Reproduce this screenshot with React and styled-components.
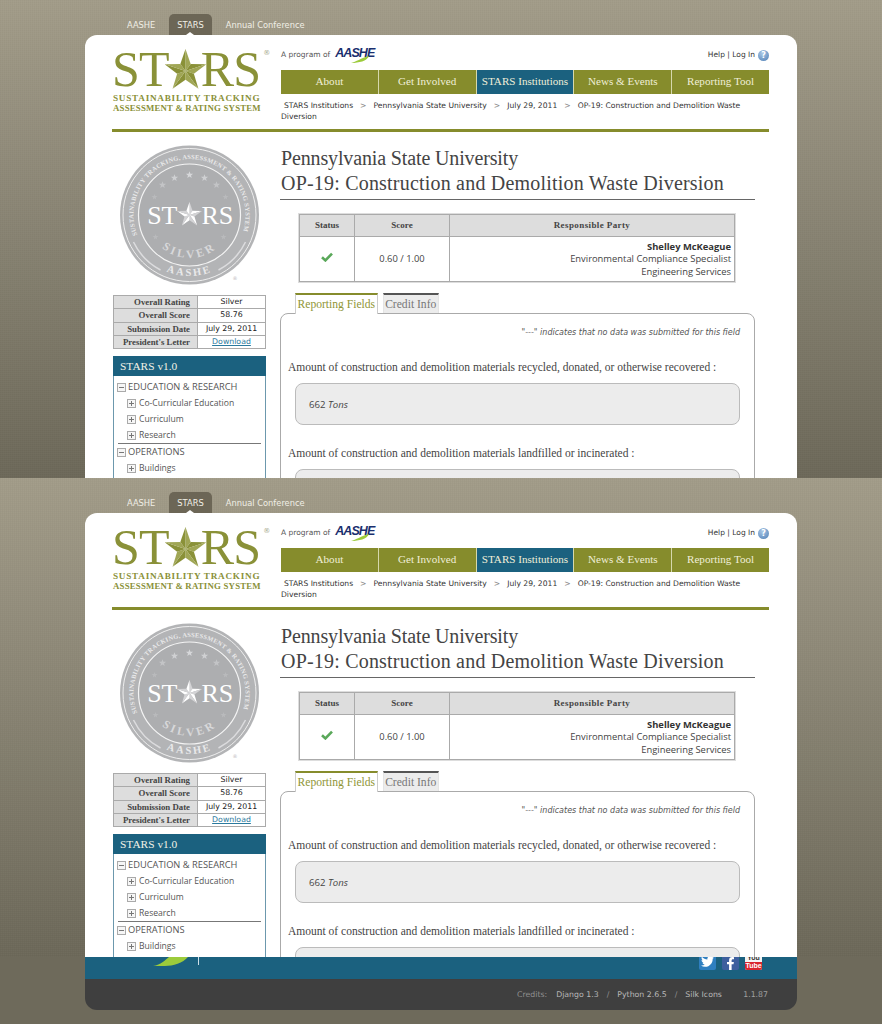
import React from "react";
import styled, { createGlobalStyle } from "styled-components";
import { FaTwitter, FaFacebookF } from "react-icons/fa";

const OLIVE = "#868c2c";
const TEAL = "#1b617f";
const SERIF = `"Liberation Serif", "Times New Roman", serif`;
const VERD = `"DejaVu Sans", Verdana, sans-serif`;
const SANS = `"Open Sans", "Noto Sans", Tahoma, sans-serif`;

const Global = createGlobalStyle`
  html, body { margin: 0; padding: 0; background: #6e6a5b; }
  * { box-sizing: border-box; }
`;

const Shot = styled.div`
  height: ${(p) => p.$h}px;
  overflow: hidden;
  background:
    repeating-linear-gradient(0deg, rgba(255,255,255,.02) 0 1px, transparent 1px 2px),
    repeating-linear-gradient(90deg, rgba(0,0,0,.02) 0 1px, transparent 1px 2px),
    linear-gradient(180deg, #a29c89 0%, #6c6859 100%);
`;
const TopNav = styled.nav`
  height: 35px;
  padding: 14px 0 0 119px;
  display: flex;
  gap: 6px;
`;
const TopItem = styled.a`
  position: relative;
  height: 21px;
  padding: 0 8px;
  font: 8.3px/22px ${VERD};
  color: #f1efe6;
  border-radius: 5px 5px 0 0;
  background: ${(p) => (p.$on ? "#6c6656" : "transparent")};
  ${(p) =>
    p.$on &&
    `&::after{content:"";position:absolute;left:17px;bottom:0;border:4px solid transparent;border-top:0;border-bottom:3px solid #fff;}`}
`;
const Page = styled.div`
  margin-left: 85px;
  width: 712px;
  padding: 0 28px 0 27px;
  background: #fff;
  border-radius: 12px 12px 0 0;
`;
const Header = styled.header`
  height: 97px;
  border-bottom: 3px solid ${OLIVE};
  display: grid;
  grid-template-columns: 169px 488px;
`;
const Logo = styled.div`
  padding: 10px 0 0 0;
  color: #8a9138;
`;
const LogoMark = styled.div`
  display: flex;
  align-items: flex-start;
  height: 48px;
  font: 400 50px/48px ${SERIF};
  letter-spacing: -0.8px;
`;
const LogoStar = styled.svg`
  margin: 3px -5px 0 -4px;
  flex: none;
`;
const Reg = styled.span`
  font: 7px/12px ${VERD};
  margin: 2px 0 0 3px;
  color: #a5a88a;
  letter-spacing: 0;
`;
const LogoLine = styled.div`
  font: 700 ${(p) => p.$size}px/10px ${SERIF};
  letter-spacing: ${(p) => p.$ls}px;
  margin-left: 1px;
  white-space: nowrap;
`;
const HeadRight = styled.div`
  display: flex;
  flex-direction: column;
`;
const Utility = styled.div`
  height: 35px;
  padding-top: 12px;
  display: flex;
  justify-content: space-between;
  font: 7.5px/16px ${VERD};
  color: #555;
`;
const Program = styled.div`
  display: flex;
  gap: 5px;
  align-items: flex-start;
`;
const AasheLogo = styled.span`
  position: relative;
  display: inline-block;
  width: 36px;
  font: italic 700 12.5px/13px "Liberation Sans", sans-serif;
  letter-spacing: -0.9px;
  color: #1a2f6e;
  svg { position: absolute; left: 16px; top: 9px; }
`;
const HelpLinks = styled.div`
  display: flex;
  gap: 3px;
  color: #333;
  font-size: 7.5px;
`;
const HelpIcon = styled.span`
  width: 11px;
  height: 11px;
  margin-top: 3px;
  border-radius: 50%;
  background: radial-gradient(circle at 40% 30%, #a9c7e6, #4f7fb5);
  color: #fff;
  font: 700 8px/11px ${VERD};
  text-align: center;
`;
const MainNav = styled.nav`
  height: 24px;
  display: flex;
  background: ${OLIVE};
`;
const NavItem = styled.a`
  flex: 1;
  text-align: center;
  font: 400 11.1px/23px ${SERIF};
  white-space: nowrap;
  color: #f0efd8;
  background: ${(p) => (p.$on ? TEAL : "transparent")};
  & + & { border-left: 1px solid #d6d8ac; }
`;
const Crumbs = styled.div`
  margin-top: 6px;
  font: 7.62px/11px ${VERD};
  color: #333;
  text-indent: 3px;
`;
const Sep = styled.span`
  color: #888;
  margin: 0 7px;
`;
const Body = styled.div`
  display: grid;
  grid-template-columns: 153px 475px;
  column-gap: 14px;
  margin-left: 1px;
`;
const Side = styled.aside`
  padding-top: 13px;
`;
const Seal = styled.svg`
  display: block;
  margin-bottom: 10px;
`;
const RatingTable = styled.table`
  width: 153px;
  border-collapse: collapse;
  margin-bottom: 7px;
  td { border: 1px solid #aaa; height: 13.25px; padding: 0; }
`;
const RatingLabel = styled.td`
  width: 84px;
  background: #ddd;
  text-align: right;
  padding-right: 7px !important;
  font: 700 8.8px/12px ${SERIF};
  color: #444;
`;
const RatingValue = styled.td`
  text-align: center;
  font: 7.8px/12px ${VERD};
  color: #222;
`;
const Download = styled.a`
  color: #2b7a9e;
  text-decoration: underline;
`;
const TreePanel = styled.div`
  height: 140px;
  border: 1px solid #6c98ad;
  border-top: 0;
`;
const TreeHead = styled.div`
  height: 20px;
  margin: 0 -1px;
  background: ${TEAL};
  color: #f2f2e6;
  font: 400 11.4px/20px ${SERIF};
  padding-left: 7px;
`;
const TreeRow = styled.div`
  height: 16px;
  display: flex;
  align-items: center;
  gap: ${(p) => (p.$child ? 3 : 2)}px;
  padding-left: ${(p) => (p.$child ? 13 : 3)}px;
  font: ${(p) => (p.$child ? 8.6 : 9.3)}px/16px ${SANS};
  color: #555;
  white-space: nowrap;
`;
const TreeList = styled.div`
  padding-top: 3px;
`;
const TreeGroup = styled.div`
  & + & {
    margin: 0 4px;
    border-top: 1px solid #777;
  }
  & + & > div { margin-left: -4px; }
`;
const Main = styled.main``;
const Title = styled.h1`
  margin: 0;
  padding: 14px 0 3px 1px;
  border-bottom: 1px solid #666;
  font: 400 20px/25px ${SERIF};
  color: #444;
`;
const TitleLine = styled.span`
  display: block;
  letter-spacing: ${(p) => p.$ls}px;
  white-space: nowrap;
`;
const CreditTable = styled.table`
  margin: 14px 0 11px 19px;
  width: 436px;
  border-collapse: collapse;
  outline: 1px solid #ddd;
  th, td { border: 1px solid #aaa; padding: 0; }
  th {
    height: 22px;
    padding-bottom: 1px;
    background: #ddd;
    font: 700 9px/12px ${SERIF};
    color: #444;
  }
  td { height: 45px; text-align: center; font: 9.4px/12.6px ${SANS}; color: #444; }
`;
const PartyHead = styled.th`
  letter-spacing: 0.4px;
`;
const Party = styled.td`
  && { text-align: right; padding: 1px 3px 0 0; }
  strong { color: #333; }
`;
const Tabs = styled.div`
  display: flex;
  gap: 5px;
  margin: 0 0 -1px 15px;
  position: relative;
`;
const Tab = styled.a`
  height: ${(p) => (p.$on ? 21 : 20)}px;
  padding: 0 1.5px;
  border-top: 2px solid ${(p) => (p.$on ? OLIVE : "#555")};
  border-left: 1px solid ${(p) => (p.$on ? "#ccc" : "#e4e4e4")};
  border-right: 1px solid ${(p) => (p.$on ? "#ccc" : "#e4e4e4")};
  background: ${(p) => (p.$on ? "#fff" : "#ececec")};
  color: ${(p) => (p.$on ? "#8f9536" : "#777")};
  font: 400 11.6px/20px ${SERIF};
  white-space: nowrap;
`;
const Panel = styled.section`
  height: 300px;
  border: 1px solid #aaa;
  border-radius: 8px 8px 0 0;
  padding: 13px 14px 0 7px;
`;
const Note = styled.div`
  text-align: right;
  font: italic 8px/12px ${VERD};
  color: #555;
`;
const FieldLabel = styled.div`
  margin-top: 20px;
  font: 400 11.5px/16px ${SERIF};
  color: #444;
`;
const FieldValue = styled.div`
  margin: 8px 0 0 7px;
  height: 42px;
  padding-left: 13px;
  background: #ececec;
  border: 1px solid #bbb;
  border-radius: 8px;
  font: 9.6px/42px ${SANS};
  color: #444;
  em { font-style: italic; }
`;
const Footer = styled.footer`
  margin-left: 85px;
  width: 712px;
  border-radius: 0 0 12px 12px;
  overflow: hidden;
`;
const FooterBand = styled.div`
  height: 22px;
  background: ${TEAL};
  padding: 0 35px 0 68px;
  display: flex;
  align-items: flex-start;
  justify-content: space-between;
  overflow: hidden;
`;
const FooterBrand = styled.div`
  display: flex;
  gap: 8px;
`;
const Socials = styled.div`
  display: flex;
  gap: 6px;
  margin-top: -4px;
`;
const Tile = styled.span`
  width: 17px;
  height: 17px;
  border-radius: 2px;
  background: ${(p) => p.$bg};
  color: #fff;
  display: flex;
  align-items: ${(p) => (p.$end ? "flex-end" : "center")};
  justify-content: center;
  font-size: 13px;
`;
const YouTube = styled.span`
  width: 17px;
  height: 17px;
  display: flex;
  flex-direction: column;
  background: #f4f4f4;
  border-radius: 2px;
  overflow: hidden;
  text-align: center;
  font: 700 7px/8px "Liberation Sans", sans-serif;
`;
const YouPart = styled.span`
  height: 9px;
  line-height: 9px;
  color: #333;
`;
const TubePart = styled.span`
  height: 8px;
  background: #d9262c;
  color: #fff;
`;
const FooterBar = styled.div`
  height: 31px;
  background: #3f3f3f;
  padding: 0 29px 0 432px;
  display: flex;
  align-items: center;
  white-space: nowrap;
  font: 7.8px/12px ${VERD};
  color: #b8b8b8;
`;
const Muted = styled.span`
  color: #8f8f8f;
  margin-right: 9px;
`;
const Slash = styled.span`
  color: #8f8f8f;
  margin: 0 8px;
`;
const Version = styled.span`
  margin-left: auto;
  color: #a0a0a0;
`;

const points = (cx, cy, R, r) => {
  const p = [];
  for (let i = 0; i < 10; i++) {
    const a = -Math.PI / 2 + (i * Math.PI) / 5;
    const rad = i % 2 ? r : R;
    p.push([cx + rad * Math.cos(a), cy + rad * Math.sin(a)]);
  }
  return p;
};

function FacetStar({ cx, cy, R, light, dark }) {
  const p = points(cx, cy, R, R * 0.4);
  return (
    <g>
      {p.map((pt, i) => {
        const n = p[(i + 1) % 10];
        return (
          <polygon
            key={i}
            points={`${cx},${cy} ${pt[0]},${pt[1]} ${n[0]},${n[1]}`}
            fill={i % 2 ? light : dark}
          />
        );
      })}
    </g>
  );
}

function PlainStar({ x, y, r, fill }) {
  const p = points(x, y, r, r * 0.42).map((q) => q.join(",")).join(" ");
  return <polygon points={p} fill={fill} />;
}

const sealStars = [
  [0, -40, "#d6d7d9"], [-15, -37, "#cfd0d2"], [15, -37, "#cfd0d2"], [-27, -30, "#c3c4c6"], [27, -30, "#c3c4c6"],
  [-35, -18, "#b9babc"], [36, -18, "#b9babc"], [-34, 22, "#b9babc"], [34, 22, "#b9babc"],
];

function SealArt() {
  return (
    <Seal width="153" height="140" viewBox="-76.5 -70 153 140">
      <defs>
        <path id="seal-top" d="M -52.3 20 A 56 56 0 1 1 52.3 20" />
        <path id="seal-aashe" d="M -40 46 A 61 61 0 0 0 40 46" />
        <path id="seal-silver" d="M -36 23.5 A 43 43 0 0 0 36 23.5" />
      </defs>
      <circle r="69.5" fill="#b3b4b6" />
      <circle r="66.5" fill="none" stroke="#eee" strokeWidth="1" />
      <circle r="51" fill="#adaeb0" stroke="#f4f4f4" strokeWidth="1.2" />
      <path d="M -56 27 A 62 62 0 0 0 -29 55" fill="none" stroke="#dcdcde" strokeWidth="1.5" />
      <path d="M 56 27 A 62 62 0 0 1 29 55" fill="none" stroke="#dcdcde" strokeWidth="1.5" />
      <text fontFamily="Liberation Serif, serif" fontSize="6.4" fontWeight="700" fill="#e9e9ea">
        <textPath href="#seal-top" startOffset="0" textLength="212" lengthAdjust="spacing">
          SUSTAINABILITY TRACKING, ASSESSMENT &amp; RATING SYSTEM
        </textPath>
      </text>
      <text fontFamily="Liberation Serif, serif" fontSize="10.5" fontWeight="700" letterSpacing="2.2" fill="#e9e9ea">
        <textPath href="#seal-aashe" startOffset="50%" textAnchor="middle">AASHE</textPath>
      </text>
      <text fontFamily="Liberation Serif, serif" fontSize="11.5" fontWeight="700" letterSpacing="3" fill="#d8d8da">
        <textPath href="#seal-silver" startOffset="50%" textAnchor="middle">SILVER</textPath>
      </text>
      {sealStars.map(([x, y, fill], i) => (
        <PlainStar key={i} x={x} y={y} r={i > 4 ? 3 : 3.8} fill={fill} />
      ))}
      <text x="-12" y="9" textAnchor="end" fontFamily="Liberation Serif, serif" fontSize="26" fill="#fff">ST</text>
      <text x="12" y="9" fontFamily="Liberation Serif, serif" fontSize="26" fill="#fff">RS</text>
      <FacetStar cx={0} cy={0} R={13} light="#fff" dark="#d4d4d6" />
      <text x="43" y="65" fontSize="5" fill="#bbb" fontFamily="DejaVu Sans, sans-serif">®</text>
    </Seal>
  );
}

const Box = ({ open }) => (
  <svg width="9" height="9" viewBox="0 0 9 9" style={{ flex: "none" }}>
    <rect x=".5" y=".5" width="8" height="8" fill="#f6f6f6" stroke="#aaa" />
    <path d={open ? "M2 4.5h5" : "M2 4.5h5M4.5 2v5"} stroke="#777" />
  </svg>
);

function Capture({ h }) {
  return (
    <Shot $h={h}>
      <TopNav>
        <TopItem>AASHE</TopItem>
        <TopItem $on>STARS</TopItem>
        <TopItem>Annual Conference</TopItem>
      </TopNav>
      <Page>
        <Header>
          <Logo>
            <LogoMark>
              ST
              <LogoStar width="41" height="43" viewBox="0 0 41 43">
                <FacetStar cx={20.5} cy={23} R={22} light="#8a9138" dark="#a0a655" />
              </LogoStar>
              RS
              <Reg>®</Reg>
            </LogoMark>
            <LogoLine $size={9.2} $ls={0.74}>SUSTAINABILITY TRACKING</LogoLine>
            <LogoLine $size={8.8} $ls={0.2}>ASSESSMENT &amp; RATING SYSTEM</LogoLine>
          </Logo>
          <HeadRight>
            <Utility>
              <Program>
                A program of
                <AasheLogo>
                  AASHE
                  <svg width="18" height="7" viewBox="0 0 18 7">
                    <path d="M0 7C5 6 10 2 18 0 16 5 8 7 0 7Z" fill="#9ccb3b" />
                  </svg>
                </AasheLogo>
              </Program>
              <HelpLinks>
                Help | Log In
                <HelpIcon>?</HelpIcon>
              </HelpLinks>
            </Utility>
            <MainNav>
              <NavItem>About</NavItem>
              <NavItem>Get Involved</NavItem>
              <NavItem $on>STARS Institutions</NavItem>
              <NavItem>News &amp; Events</NavItem>
              <NavItem>Reporting Tool</NavItem>
            </MainNav>
            <Crumbs>
              STARS Institutions<Sep>&gt;</Sep>Pennsylvania State University<Sep>&gt;</Sep>July 29, 2011<Sep>&gt;</Sep>OP-19: Construction and Demolition Waste Diversion
            </Crumbs>
          </HeadRight>
        </Header>
        <Body>
          <Side>
            <SealArt />
            <RatingTable>
              <tbody>
                <tr><RatingLabel>Overall Rating</RatingLabel><RatingValue>Silver</RatingValue></tr>
                <tr><RatingLabel>Overall Score</RatingLabel><RatingValue>58.76</RatingValue></tr>
                <tr><RatingLabel>Submission Date</RatingLabel><RatingValue>July 29, 2011</RatingValue></tr>
                <tr><RatingLabel>President's Letter</RatingLabel><RatingValue><Download>Download</Download></RatingValue></tr>
              </tbody>
            </RatingTable>
            <TreePanel>
              <TreeHead>STARS v1.0</TreeHead>
              <TreeList>
                <TreeGroup>
                  <TreeRow><Box open />EDUCATION &amp; RESEARCH</TreeRow>
                  <TreeRow $child><Box />Co-Curricular Education</TreeRow>
                  <TreeRow $child><Box />Curriculum</TreeRow>
                  <TreeRow $child><Box />Research</TreeRow>
                </TreeGroup>
                <TreeGroup>
                  <TreeRow><Box open />OPERATIONS</TreeRow>
                  <TreeRow $child><Box />Buildings</TreeRow>
                </TreeGroup>
              </TreeList>
            </TreePanel>
          </Side>
          <Main>
            <Title>
              <TitleLine $ls={-0.14}>Pennsylvania State University</TitleLine>
              <TitleLine $ls={0.2}>OP-19: Construction and Demolition Waste Diversion</TitleLine>
            </Title>
            <CreditTable>
              <thead>
                <tr>
                  <th style={{ width: 55 }}>Status</th>
                  <th style={{ width: 95 }}>Score</th>
                  <PartyHead>Responsible Party</PartyHead>
                </tr>
              </thead>
              <tbody>
                <tr>
                  <td>
                    <svg width="12" height="10" viewBox="0 0 12 10">
                      <path d="M1 5.2 4.4 8.4 11 1.6" fill="none" stroke="#5aa85a" strokeWidth="2.6" />
                    </svg>
                  </td>
                  <td>0.60 / 1.00</td>
                  <Party>
                    <strong>Shelley McKeague</strong>
                    <br />
                    Environmental Compliance Specialist
                    <br />
                    Engineering Services
                  </Party>
                </tr>
              </tbody>
            </CreditTable>
            <Tabs>
              <Tab $on>Reporting Fields</Tab>
              <Tab>Credit Info</Tab>
            </Tabs>
            <Panel>
              <Note>"---" indicates that no data was submitted for this field</Note>
              <FieldLabel>Amount of construction and demolition materials recycled, donated, or otherwise recovered :</FieldLabel>
              <FieldValue>662 <em>Tons</em></FieldValue>
              <FieldLabel>Amount of construction and demolition materials landfilled or incinerated :</FieldLabel>
              <FieldValue />
            </Panel>
          </Main>
        </Body>
      </Page>
    </Shot>
  );
}

export default function App() {
  return (
    <>
      <Global />
      <Capture h={478} />
      <Capture h={479} />
      <Footer>
        <FooterBand>
          <FooterBrand>
            <svg width="37" height="9" viewBox="0 0 37 9">
              <path d="M0 9C8 8 12 3 16 0H35C30 6 20 9 12 9Z" fill="#9ccb3b" />
            </svg>
            <svg width="1" height="8" viewBox="0 0 1 8">
              <rect width="1" height="8" fill="#cfe0e8" />
            </svg>
          </FooterBrand>
          <Socials>
            <Tile $bg="#2f7fc0"><FaTwitter /></Tile>
            <Tile $bg="#3d5f9e" $end><FaFacebookF /></Tile>
            <YouTube>
              <YouPart>You</YouPart>
              <TubePart>Tube</TubePart>
            </YouTube>
          </Socials>
        </FooterBand>
        <FooterBar>
          <Muted>Credits:</Muted>
          Django 1.3<Slash>/</Slash>Python 2.6.5<Slash>/</Slash>Silk Icons
          <Version>1.1.87</Version>
        </FooterBar>
      </Footer>
    </>
  );
}
